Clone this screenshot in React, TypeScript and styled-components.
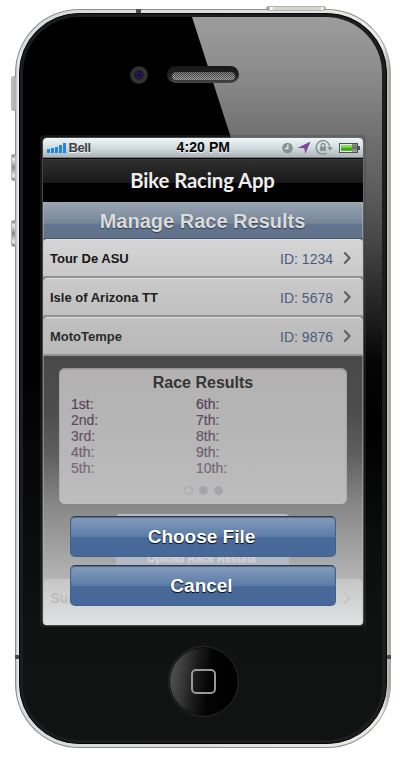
import React from "react";
import styled, { createGlobalStyle } from "styled-components";

const GlobalStyle = createGlobalStyle`
  body { margin: 0; background: #fff; }
  * { box-sizing: border-box; }
`;

const Stage = styled.main`
  width: 400px;
  height: 762px;
  padding: 9px 9px 14px 15px;
  background: #fff;
  overflow: hidden;
  font-family: "Liberation Sans", Arial, sans-serif;
`;

const Device = styled.div`
  position: relative;
  width: 376px;
  height: 739px;
  border-radius: 64px;
  border: 1px solid #8d8f8e;
  border-right-color: #aaa8a2;
  background: linear-gradient(90deg, #b9bdbf 0, #e6eaec 2px, #d8dcde 8px, #dedcd9 50%, #eeeae6 98%, #a8a49f 100%);
  padding: 3px;
`;

const Band = styled.div`
  height: 100%;
  border-radius: 60px;
  background: #1c1d1f;
  border: 1px solid #050505;
  padding: 3px 4px 3px 3px;
`;

const Face = styled.div`
  position: relative;
  height: 100%;
  border-radius: 56px;
  overflow: hidden;
  background: linear-gradient(#000 0, #000 340px, #101111 610px, #111212 100%);
  display: flex;
  flex-direction: column;
  align-items: center;
`;

const Glare = styled.div`
  position: absolute;
  inset: 0;
  clip-path: polygon(169px 0, 100% 0, 100% 100%, 402px 723px);
  background: linear-gradient(#9c9c9c 0, #8e8e8e 50px, #707070 120px, #505050 205px, #2b2b2b 275px, #050505 345px, #000 410px, #0c0d0d 530px, #111212 600px);
`;

const Forehead = styled.div`
  position: relative;
  align-self: stretch;
  height: 118px;
  padding: 49px 0 0 107px;
  display: flex;
  gap: 19px;
`;

const Camera = styled.div`
  width: 18px;
  height: 18px;
  border-radius: 50%;
  background: radial-gradient(circle, #16042f 0 1px, #39157d 2px, #17151e 3.5px, #2b2c2f 5px, #36373a 7px, #242527 9px);
`;

const Earpiece = styled.div`
  width: 72px;
  height: 17px;
  border-radius: 9px;
  padding: 6px 4px 3px 5px;
  background: linear-gradient(#181818, #202020 50%, #464646);
`;

const Mesh = styled.div`
  height: 8px;
  border-radius: 4px;
  background:
    linear-gradient(rgba(0, 0, 0, 0.3), rgba(0, 0, 0, 0)),
    repeating-conic-gradient(#b0b0b0 0 25%, #555 0 50%) 0 0 / 2px 2px;
`;

const ScreenFrame = styled.div`
  position: relative;
  width: 326px;
  height: 492px;
  flex: none;
  padding: 3px;
  border-radius: 4px;
  background: rgba(65, 65, 65, 0.3);
`;

const Screen = styled.div`
  position: relative;
  height: 487px;
  border-radius: 4px;
  overflow: hidden;
  background: linear-gradient(#494949 218px, #4d4d4d 275px, #5e5e5e 315px, #898989 370px, #a7a7a7 420px, #cfcfcf 487px);
  box-shadow: 0 0 0 0.5px #777;
  &::after {
    content: "";
    position: absolute;
    inset: 64px 0 0;
    border: solid rgba(190, 195, 190, 0.45);
    border-width: 0 1px;
    pointer-events: none;
  }
`;

const StatusBar = styled.header`
  height: 20px;
  display: grid;
  grid-template-columns: 130px 60px 1fr;
  align-items: center;
  padding: 0 3px 0 4px;
  background: linear-gradient(#edf5f7, #d4dde0 50%, #adb5b8);
  color: #050505;
  border-bottom: 1px solid #777d80;
`;

const Carrier = styled.div`
  display: flex;
  align-items: center;
  gap: 3px;
  font: bold 13px/19px "Liberation Sans", Arial, sans-serif;
  color: #3e4245;
  letter-spacing: -0.4px;
  text-shadow: 0 1px 0 #f1f5f5;
`;

const Clock = styled.div`
  font: bold 14px/19px "Liberation Sans", Arial, sans-serif;
  letter-spacing: 0.1px;
  text-shadow: 0 1px 0 #f1f5f5;
  white-space: nowrap;
`;

const StatusIcons = styled.div`
  display: flex;
  justify-content: flex-end;
`;

const NavBar = styled.div`
  height: 44px;
  border-top: 1px solid #050505;
  background: linear-gradient(#454545 0, #2f2f2f 1px, #191919 24px, #020202 24px, #000 100%);
  color: #eee;
  text-align: center;
  font: bold 20.3px/43px Lato, Carlito, sans-serif;
  letter-spacing: -0.1px;
`;

const Heading = styled.h1`
  margin: 0;
  height: 37px;
  border-top: 1px solid #a0a7ad;
  border-bottom: 1px solid #44566c;
  background: linear-gradient(#98a4b1, #75869a 58%, #63758e 60%, #60728b);
  color: #dbdbdb;
  text-align: center;
  font: bold 20px/36px "Liberation Sans", Arial, sans-serif;
  text-shadow: 0 1px 1px #313e4d;
`;

const Race = styled.div<{ $top: string; $bottom: string; $ink: string }>`
  height: 39px;
  display: flex;
  align-items: center;
  padding: 0 11px 0 7.5px;
  border-top: 1px solid #e0e0e0;
  border-bottom: 2px solid #919191;
  border-radius: 4px 4px 0 0;
  background: linear-gradient(${(p) => p.$top}, ${(p) => p.$bottom});
  color: ${(p) => p.$ink};
`;

const RaceName = styled.strong`
  flex: 1;
  font-size: 13px;
`;

const RaceId = styled.span`
  margin-right: 9.5px;
  padding-top: 2px;
  font-size: 14px;
  color: #4c5b7b;
`;

const Results = styled.section`
  width: 288px;
  height: 136px;
  margin: 12px 16px 0;
  padding: 6px 0 0 1px;
  border-radius: 6px;
  background: linear-gradient(#b3b1b2, #b6b6b6 50%, #bdbdbd);
  box-shadow: inset 0 1px 2px #8b8b8b, inset 0 -1px 1px #c4c4c4;
`;

const ResultsTitle = styled.h2`
  margin: 0;
  text-align: center;
  font-size: 16px;
  line-height: 18px;
  color: #353535;
`;

const Places = styled.ol`
  margin: 4px 0 0;
  padding: 0 0 0 11.5px;
  list-style: none;
  display: grid;
  grid-auto-flow: column;
  grid-template: repeat(5, 16px) / 125px 1fr;
  font-size: 14px;
  line-height: 16px;
`;

const Place = styled.li<{ $ink: string }>`
  color: ${(p) => p.$ink};
  -webkit-text-stroke: 0.2px ${(p) => p.$ink};
`;

const Dots = styled.div`
  display: flex;
  justify-content: center;
  gap: 6px;
  padding-top: 10px;
`;

const Dot = styled.i<{ $open?: boolean }>`
  width: 9px;
  height: 9px;
  border-radius: 50%;
  border: 1px solid #a6a8aa;
  background: ${(p) => (p.$open ? "transparent" : "#a3a6a9")};
`;

const Upload = styled.div`
  width: 173px;
  height: 65px;
  margin: 10px 0 0 73px;
  padding-top: 35px;
  border-top: 1px solid #bcbcbc;
  border-radius: 4px 4px 0 0;
  background: #b5b7c4;
  color: #d4d4d4;
  text-align: center;
  font: bold 11px/16px "Liberation Sans", Arial, sans-serif;
  white-space: nowrap;
  text-shadow: 0 1px 0 #c2c2cc;
`;

const Submit = styled.div`
  display: flex;
  align-items: center;
  justify-content: space-between;
  height: 46px;
  padding: 0 11px 8px 8px;
  border-radius: 5px 5px 0 0;
  background: linear-gradient(#c6c6c6, #e0e1e2);
  color: #bcbcbc;
  font: bold 14px/18px "Liberation Sans", Arial, sans-serif;
`;

const Actions = styled.div`
  position: absolute;
  left: 27px;
  right: 27px;
  bottom: 19px;
  display: flex;
  flex-direction: column;
  gap: 8px;
`;

const Action = styled.button`
  height: 41px;
  padding: 0 2px 0 0;
  border: 1px solid #3f638f;
  border-top: 1px solid #2e3b4e;
  border-radius: 5px;
  background: linear-gradient(#88a0bf 0, #7e98ba 3px, #5c7ba7 50%, #48699a 53%, #47699a);
  box-shadow: inset 0 1px 1px #536780;
  color: #fff;
  font: bold 19px/38px "Liberation Sans", Arial, sans-serif;
  text-shadow: 0 1px 0 #101820, 0 1px 1px #101820;
`;

const Chin = styled.div`
  position: relative;
  flex: 1;
  padding: 19px 0 0 1px;
`;

const Home = styled.div`
  width: 71px;
  height: 71px;
  border-radius: 50%;
  border: 1px solid #292929;
  box-shadow: inset 0 0 0 1px #090909;
  background: linear-gradient(98deg, #5a5a5a 0, #353535 25%, #1d1d1d 38%, #030303 58%, #000);
  display: grid;
  place-items: center;
`;

const HomeGlyph = styled.div`
  width: 25px;
  height: 25px;
  border: 2px solid #999;
  border-radius: 5px;
`;

const SideButton = styled.div<{ $x: number; $y: number; $w: number; $h: number }>`
  position: absolute;
  left: ${(p) => p.$x}px;
  top: ${(p) => p.$y}px;
  width: ${(p) => p.$w}px;
  height: ${(p) => p.$h}px;
  border: 1px solid #b5b5b2;
  border-radius: 2px;
  background: ${(p) =>
    p.$w > p.$h
      ? "linear-gradient(90deg, #777 0, #fff 4px, #d4d4d0 7px, #d4d4d0 53px, #fff 56px, #777)"
      : "linear-gradient(#777 0, #eee 4px, #888 50%, #eee calc(100% - 4px), #777)"};
`;

const LockSwitch = styled(SideButton)`
  background: linear-gradient(90deg, #c7c7c4, #aaa);
`;

const Seam = styled.div<{ $x: number; $y: number; $w?: number }>`
  position: absolute;
  left: ${(p) => p.$x}px;
  top: ${(p) => p.$y}px;
  width: ${(p) => p.$w ?? 4}px;
  height: 4px;
  background: #4b4b4b;
`;

const Chevron = ({ color = "#626262" }: { color?: string }) => (
  <svg width="9" height="14" viewBox="0 0 9 14" fill="none">
    <path d="M1.3 1.4 6.5 7l-5.2 5.6" stroke={color} strokeWidth="2.2" />
  </svg>
);

const SignalBars = () => (
  <svg width="19" height="12" viewBox="0 0 19 12" fill="#1d87e8">
    <path d="M0 7h3v4H0zM4 6h3v5H4zM8 5h3v6H8zM12 3h3v8h-3zM16 1h3v10h-3z" />
  </svg>
);

const Indicators = () => (
  <svg width="80" height="18" viewBox="0 0 80 18">
    <defs>
      <linearGradient id="arrow" x1="0" y1="0" x2="0" y2="1">
        <stop stopColor="#614a91" />
        <stop offset="1" stopColor="#9b45a2" />
      </linearGradient>
      <linearGradient id="charge" x1="0" y1="0" x2="0" y2="1">
        <stop stopColor="#a0e26d" />
        <stop offset=".45" stopColor="#6bca35" />
        <stop offset=".5" stopColor="#36a50f" />
        <stop offset="1" stopColor="#55b42f" />
      </linearGradient>
      <linearGradient id="empty" x1="0" y1="0" x2="0" y2="1">
        <stop stopColor="#8c8f91" />
        <stop offset=".5" stopColor="#6d6d6e" />
        <stop offset="1" stopColor="#aaa" />
      </linearGradient>
    </defs>
    <circle cx="7.5" cy="9" r="5.3" fill="#849294" />
    <path d="M7.8 5.5v4H5" fill="none" stroke="#e5ecec" strokeWidth="1.4" />
    <path d="M30.5 2.5 25.3 15 24.2 9.3 17.5 9z" fill="url(#arrow)" />
    <path d="M46.6 14.2A6.8 6.8 0 1 1 49.8 8.5" fill="none" stroke="#859294" strokeWidth="1.5" />
    <path d="M47 8.2h6l-3 3.6z" fill="#859294" />
    <path d="M41.2 8V6.4a1.9 1.9 0 0 1 3.8 0V8" fill="none" stroke="#859294" strokeWidth="1.3" />
    <path d="M40 7.8h6v4.2h-6z" fill="#859294" />
    <rect x="59.5" y="4.5" width="18" height="9" fill="#e5e9e9" stroke="#4c5055" />
    <path d="M61 6h11v6H61z" fill="url(#charge)" />
    <path d="M72 5h5v8h-5z" fill="url(#empty)" />
    <path d="M78 7h2v4h-2z" fill="#4c5055" />
  </svg>
);

const races = [
  { name: "Tour De ASU", id: "1234", top: "#d5d5d5", bottom: "#c9c9c9", ink: "#161616" },
  { name: "Isle of Arizona TT", id: "5678", top: "#c9c9c9", bottom: "#c0c0c0", ink: "#202020" },
  { name: "MotoTempe", id: "9876", top: "#c0c0c0", bottom: "#b9b9b9", ink: "#2b2b2b" },
];

const places = ["1st", "2nd", "3rd", "4th", "5th", "6th", "7th", "8th", "9th", "10th"];
const placeInks = ["#593f59", "#614860", "#69516a", "#735d73", "#7b677d"];

export default function App() {
  return (
    <>
      <GlobalStyle />
      <Stage>
        <Device>
          <SideButton $x={250} $y={-4} $w={60} $h={5} />
          <LockSwitch $x={-5} $y={66} $w={5} $h={35} />
          <SideButton $x={-5} $y={144} $w={5} $h={27} />
          <SideButton $x={-5} $y={210} $w={5} $h={27} />
          <Seam $x={120} $y={-1} $w={5} />
          <Seam $x={-1} $y={645} />
          <Seam $x={371} $y={645} />
          <Band>
            <Face>
              <Glare />
              <Forehead>
                <Camera />
                <Earpiece>
                  <Mesh />
                </Earpiece>
              </Forehead>
              <ScreenFrame>
                <Screen>
                  <StatusBar>
                    <Carrier>
                      <SignalBars />
                      Bell
                    </Carrier>
                    <Clock>4:20 PM</Clock>
                    <StatusIcons>
                      <Indicators />
                    </StatusIcons>
                  </StatusBar>
                  <NavBar>Bike Racing App</NavBar>
                  <Heading>Manage Race Results</Heading>
                  {races.map((race) => (
                    <Race key={race.id} $top={race.top} $bottom={race.bottom} $ink={race.ink}>
                      <RaceName>{race.name}</RaceName>
                      <RaceId>ID: {race.id}</RaceId>
                      <Chevron />
                    </Race>
                  ))}
                  <Results>
                    <ResultsTitle>Race Results</ResultsTitle>
                    <Places>
                      {places.map((place, i) => (
                        <Place key={place} $ink={placeInks[i % 5]}>
                          {place}:
                        </Place>
                      ))}
                    </Places>
                    <Dots>
                      <Dot $open />
                      <Dot />
                      <Dot />
                    </Dots>
                  </Results>
                  <Upload>Upload Race Results</Upload>
                  <Submit>
                    Sur
                    <Chevron color="#c5c5c5" />
                  </Submit>
                  <Actions>
                    <Action>Choose File</Action>
                    <Action>Cancel</Action>
                  </Actions>
                </Screen>
              </ScreenFrame>
              <Chin>
                <Home>
                  <HomeGlyph />
                </Home>
              </Chin>
            </Face>
          </Band>
        </Device>
      </Stage>
    </>
  );
}
